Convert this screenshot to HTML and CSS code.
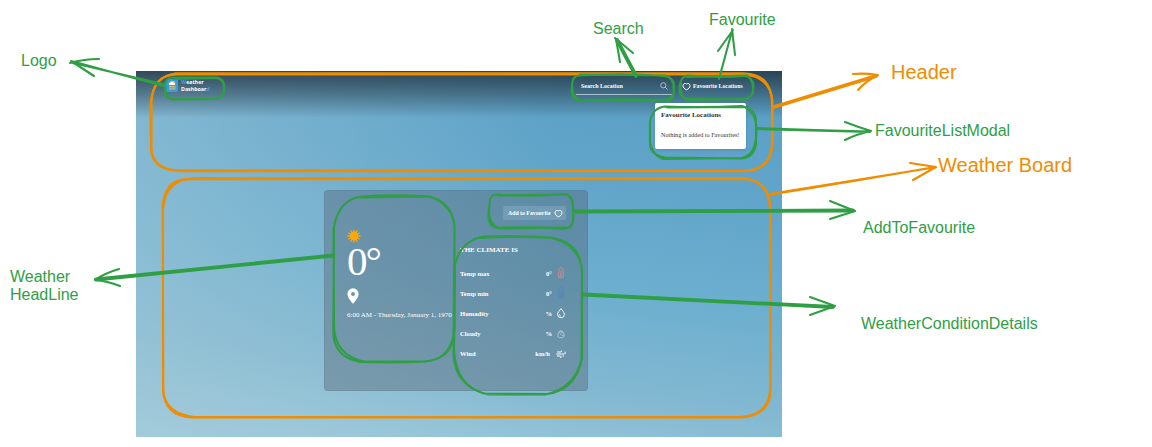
FILE: index.html
```html
<!DOCTYPE html>
<html lang="en">
<head>
<meta charset="utf-8">
<title>Weather Dashboard components</title>
<link rel="stylesheet" href="styles.css">
</head>
<body>
<main class="canvas">
  <section class="app">
    <header class="header">
      <div class="logo">
        <svg class="logo-mark" viewBox="0 0 12 13"><rect width="12" height="13" rx="1" fill="#369be3"/><circle cx="7.2" cy="4" r="2" fill="#e8c35c"/><path d="M3 6a1.6 1.6 0 0 1 1-2.5 2 2 0 0 1 3.6.4A1.5 1.5 0 0 1 9 6z" fill="#fff"/><path d="M3 7h6.5v1.5H3zM3 9.2h6.5v1.4H3z" fill="#c9bb7b"/></svg>
        <div class="logo-text"><b><i>W</i>eather</b><b>Dashboar<i>d</i></b></div>
      </div>
      <div class="search"><span>Search Location</span>
        <svg viewBox="0 0 8 8" class="search-icon"><circle cx="3.3" cy="3.3" r="2.6"/><path d="M5.2 5.2 7.6 7.6"/></svg>
      </div>
      <div class="fav-link"><svg class="heart" viewBox="0 0 9 8"><path d="M4.5 7.3C2.5 6.5 1 5 1 3.2 1 .7 3.4.7 4.5 1.5 5.6.7 8 .7 8 3.2 8 5 6.5 6.5 4.500 7.300z"/></svg><span>Favourite Locations</span></div>
      <aside class="modal"><h2>Favourite Locations</h2><p>Nothing is added to Favourites!</p></aside>
    </header>
    <section class="board">
      <div class="headline">
        <svg class="sun" viewBox="-7 -7 14 14"><circle r="4.4"/><path class="rays" d="M0-6.600V6.600M-6.600 0H6.600M-5.700-3.300 5.700 3.300M-5.700 3.300 5.700-3.300M-3.300-5.700 3.300 5.700M-3.300 5.700 3.300-5.700"/></svg>
        <div class="degrees">0°</div>
        <svg class="pin" viewBox="0 0 12 16"><path fill-rule="evenodd" d="M6 .3A5.6 5.6 0 0 0 .4 5.9C.4 9.8 6 15.7 6 15.7s5.6-5.9 5.6-9.8A5.6 5.6 0 0 0 6 .3zM6 4a2 2 0 1 1 0 4 2 2 0 0 1 0-4z"/></svg>
        <time>6:00 AM - Thursday, January 1, 1970</time>
      </div>
      <div class="details">
        <button class="add"><span>Add to Favourite</span><svg class="heart" viewBox="0 0 9 8"><path d="M4.5 7.3C2.5 6.5 1 5 1 3.2 1 .7 3.4.7 4.5 1.5 5.6.7 8 .7 8 3.2 8 5 6.5 6.5 4.500 7.300z"/></svg></button>
        <h3>THE CLIMATE IS</h3>
        <ul class="climate">
          <li><span>Temp max</span><em>0°</em><svg class="hot" viewBox="0 0 10 12"><path d="M2.9 6V2.7a2.1 2.1 0 0 1 4.2 0V6q.7 1 .7 2.2a2.8 2.8 0 0 1-5.6 0Q2.2 7 2.9 6zM5 3.5V8"/><circle cx="5" cy="8.5" r="1"/></svg></li>
          <li><span>Temp min</span><em>0°</em><svg class="cold" viewBox="0 0 10 12"><path d="M2.9 6V2.7a2.1 2.1 0 0 1 4.2 0V6q.7 1 .7 2.2a2.8 2.8 0 0 1-5.6 0Q2.2 7 2.9 6zM5 3.5V8"/><circle cx="5" cy="8.5" r="1"/></svg></li>
          <li><span>Humadity</span><em>%</em><svg viewBox="0 0 10 12"><path d="M5 1.6C3.8 3.5 1.6 5.3 1.6 7.4a3.4 3.4 0 0 0 6.8 0C8.4 5.300 6.200 3.500 5 1.600zM3.200 7.400q.2 1.500 1.600 1.800"/></svg></li>
          <li><span>Cloudy</span><em>%</em><svg class="faint" viewBox="0 0 10 12"><path d="M1.800 7A3.200 3.200 0 0 1 8.200 7 2.500 2.500 0 0 1 6.500 9.700H3.400A2.300 2.300 0 0 1 1.800 7zM2.800 3.700Q5 1.600 7.300 3.600M4.700 5.600c0 1.300 1 1.900 3 1.700"/></svg></li>
          <li><span>Wind</span><em>km/h</em><svg class="wind" viewBox="0 0 10 10"><path d="M1 3H5Q5.800 2.900 5.500 1.600M.3 5H8.500Q9.900 4.500 9 2.700M1 7H4.500Q5.600 7.500 4.600 9M6.500 7H8"/></svg></li>
        </ul>
      </div>
    </section>
  </section>

  <svg class="ink" viewBox="0 0 1152 447">
    <g class="orange">
      <path d="M176 73.300H742Q772 73 772 104V145Q770 170 744 171L178 170.200Q151 170 151 147L150.500 106Q152 76 176 73.300Z"/>
      <path d="M178 74.500H744Q773 77 772.500 106V141Q773 171 742 171.300H180Q150 169 151.500 145V102Q153 74 178 74.500Z"/>
      <path d="M194 178H742Q771 180 770.500 211V387Q769 417 739 417L192 417.500Q164 416 163 389V209Q165 180 194 178Z"/>
      <path d="M191 179.300 744 179Q768 180 770 208L770.500 389Q771 415 741 417.500L194 417Q165 413 163.300 391L162.700 205Q166 177 191 179.300Z"/>
      <path class="w3" d="M774 107 876 76"/><path d="M853 74Q865 73 878 75Q866 81 858 90"/>
      <path d="M771 194.500Q850 182 935 167M771 193.800 934 167.500M910 163 936 167 913 180"/>
    </g>
    <g class="green">
      <path d="M172 77.500H217Q224 79 224.300 86V91Q223 99 215 99L172 99.500Q164 98 165 90V84Q166 78 172 77.500ZM174 79 216 78Q224 79 224 88Q224 98 216 98.700H170Q165 96 165.500 88"/>
      <path d="M581 75.500Q625 73 664 76Q674 77 674 86V92Q672 100 663 100Q615 98 579 101Q571 99 571.500 90L572.500 82Q573 75 581 75.500ZM580 74.500 665 75.500Q674 78 673.500 88Q675 101 665 101.300L580 100Q572 98 572 84"/>
      <path d="M688 75.500Q718 78 745 76Q753 77 753.500 86Q753 98 745 99.500L688 98.500Q679 98 679.500 89Q680 76 688 75.500ZM687 77 747 75.500Q754 80 753 93Q749 100 739 99L686 100Q679 95 681 83"/>
      <path d="M665 106.500Q705 108 742 106Q756 110 756 121V144Q754 157 742 158.500L665 157.500Q650 155 650 143V122Q652 108 665 106.500ZM667 107.500 745 107Q756 113 756.500 128Q757 155 742 158L663 159Q649 153 650 137"/>
      <path d="M362 196.500Q395 194 428 196.500Q452 201 454.500 226L454 334Q452 359 425 361.500Q395 363 360 362Q334 357 333.300 333L334 227Q339 199 362 196.500ZM360 197.500 430 196.500Q455 206 454.500 230V330Q451 361 423 361.500L364 361.500Q334 355 334 325L333.500 229"/>
      <path d="M496 194.500Q535 197 565 194Q573 196 573 205L573.500 218Q573 228 564 229Q530 226 497 228Q488 226 488.500 216L489.500 203Q490 195 496 194.500ZM498 195.500 567 194.500Q574 199 573 212Q575 230 565 227.500L499 228.500Q488 224 489 208"/>
      <path d="M484 236.500Q520 235 550 237.500Q582 242 582 274V358Q576 390 547 394L484 393.500Q456 385 453.500 356L454 270Q458 241 484 236.500ZM480 238Q520 236 552 238Q579 245 582 270L581.500 360Q574 389 545 394.500H488Q456 388 454 350L455 265"/>
      <path d="M165 86.500 73 61.500M165 84.500 73 63"/><path d="M70 63Q84 59 99 59M71 61 94 76"/>
      <path class="w3" d="M636 76 617 40"/><path d="M615 38 633 53M616 39 620 62M719 79 732 31M733 30 718 51M732 29 735 55"/>
      <path d="M757 128Q812 130 869 131.500M757 129 870 132M845 122Q858 127 871 131Q857 134 845 140"/>
      <path class="w3" d="M333 255.500 96 279.500"/><path d="M119 269Q105 273 95 280Q107 281 120 286"/>
      <path class="w3" d="M574 211.500Q710 210.500 853 210.500"/><path d="M830 201 855 211 830 219"/>
      <path class="w3" d="M583 294.500 833 307"/><path d="M810 297 835 306 810 315"/>
    </g>
  </svg>
  <span class="note logo-note">Logo</span>
  <span class="note search-note">Search</span>
  <span class="note favourite-note">Favourite</span>
  <span class="note modal-note">FavouriteListModal</span>
  <span class="note add-note">AddToFavourite</span>
  <span class="note details-note">WeatherConditionDetails</span>
  <span class="note headline-note">Weather<br>HeadLine</span>
  <span class="note large header-note">Header</span>
  <span class="note large board-note">Weather Board</span>
</main>
</body>
</html>
```
FILE: styles.css
```css
* { box-sizing: border-box; margin: 0; padding: 0; }
body { background: #fff; }
.canvas { position: relative; width: 1152px; height: 447px; padding: 71px 0 0 136px; overflow: hidden; }
.app { width: 646px; height: 366px; font-family: "Liberation Serif", serif; color: #fff;
  background: linear-gradient(90deg, rgba(165,202,216,.5), rgba(165,202,216,0) 65%), linear-gradient(187deg, #5a9fc5 5%, #61a5ca 30%, #6dafcf 55%, #82b8d1 77%, #a0ccdd 100%); }
.header { position: relative; display: flex; height: 47px; padding: 7px 36px 0 30px; background: linear-gradient(rgba(29,45,57,.8), rgba(40,60,74,.49) 50%, rgba(40,60,74,0)); }
.logo { display: flex; gap: 3px; width: 410px; padding-top: 1px; }
.logo-mark { width: 12px; height: 13px; }
.logo-text { font: 5.3px/6.5px "Open Sans", sans-serif; }
.logo-text b { display: block; }
.logo-text i { font-style: normal; color: #42a4e9; }
.search { display: flex; justify-content: space-between; width: 96px; height: 17px; padding: 4px 4px 0 5px; border-bottom: 1px solid rgba(220,230,235,.65); font-weight: bold; font-size: 6px; line-height: 9px; }
svg { display: block; flex: none; }
.search-icon { width: 8px; height: 8px; fill: none; stroke: #c7d5dd; stroke-width: .8; }
.fav-link { display: flex; gap: 2px; padding: 4px 0 0 10px; font-weight: bold; font-size: 5.8px; line-height: 9px; white-space: nowrap; }
.heart { width: 9px; height: 9px; fill: none; stroke: #fff; stroke-width: 1; }
.modal { position: absolute; left: 519px; top: 32px; width: 91px; height: 46px; padding: 8px 6px; border-radius: 2px; background: #fff; box-shadow: 0 1px 3px rgba(30,60,80,.2); color: #333; white-space: nowrap; }
.modal h2 { font-size: 7px; line-height: 8px; }
.modal p { margin-top: 11px; font-size: 6.2px; line-height: 9px; }
.board { display: flex; width: 264px; height: 201px; margin: 72px 0 0 188px; padding: 0 21px 0 22px; border: 1px solid rgba(70,105,120,.18); border-radius: 4px; background: rgba(84,98,112,.4); }
.headline { width: 113px; padding-top: 38px; white-space: nowrap; }
.sun { width: 14px; height: 14px; fill: #faa80b; }
.rays { stroke: #faa80b; stroke-width: 1.3; }
.degrees { height: 43px; font-size: 41px; line-height: 38px; letter-spacing: -2px; margin-top: -1px; }
.pin { width: 12px; height: 16px; margin-top: 3px; fill: #fff; }
time { display: block; margin-top: 6px; font-size: 7px; line-height: 10px; }
.details { flex: 1; padding-top: 15px; }
.add { display: flex; align-items: center; gap: 3px; width: 63px; height: 14px; margin-left: auto; padding-left: 5px; border: 0; border-radius: 2px; background: rgba(180,210,225,.24); color: #fff; font: bold 5.8px/9px "Liberation Serif", serif; white-space: nowrap; }
.details h3 { margin-top: 25px; font-size: 7px; line-height: 10px; white-space: nowrap; }
.climate { list-style: none; padding-top: 8px; }
.climate li { display: flex; align-items: center; height: 20.2px; font-size: 6.6px; font-weight: bold; }
.climate em { margin-left: auto; font-style: normal; }
.climate svg { width: 10px; height: 12px; margin-left: 4px; fill: none; stroke: #fff; stroke-width: .9; }
.climate .hot { stroke: #db8587; }
.climate .cold { stroke: #5484bd; }
.climate .faint { stroke: #cbd9e0; stroke-width: .7; }
.climate .wind { height: 10px; margin-left: 6px; stroke-width: 1; }
.ink { position: absolute; inset: 0; width: 1152px; height: 447px; fill: none; stroke-linecap: round; stroke-linejoin: round; stroke-width: 2.1; }
.orange { stroke: #f08c00; }
.green { stroke: #2f9e44; }
.w3 { stroke-width: 3.8; }
.note { position: absolute; color: #2f9e44; font: 16px/18px "Liberation Sans", Arial, sans-serif; white-space: nowrap; }
.large { color: #f08c00; font-size: 20px; line-height: 23px; }
.logo-note { left: 21px; top: 52px; }
.search-note { left: 593px; top: 20px; }
.favourite-note { left: 709px; top: 11px; }
.modal-note { left: 875px; top: 122px; }
.add-note { left: 863px; top: 219px; }
.details-note { left: 861px; top: 315px; }
.headline-note { left: 10px; top: 268px; }
.header-note { left: 891px; top: 61px; }
.board-note { left: 938px; top: 154px; }
```
